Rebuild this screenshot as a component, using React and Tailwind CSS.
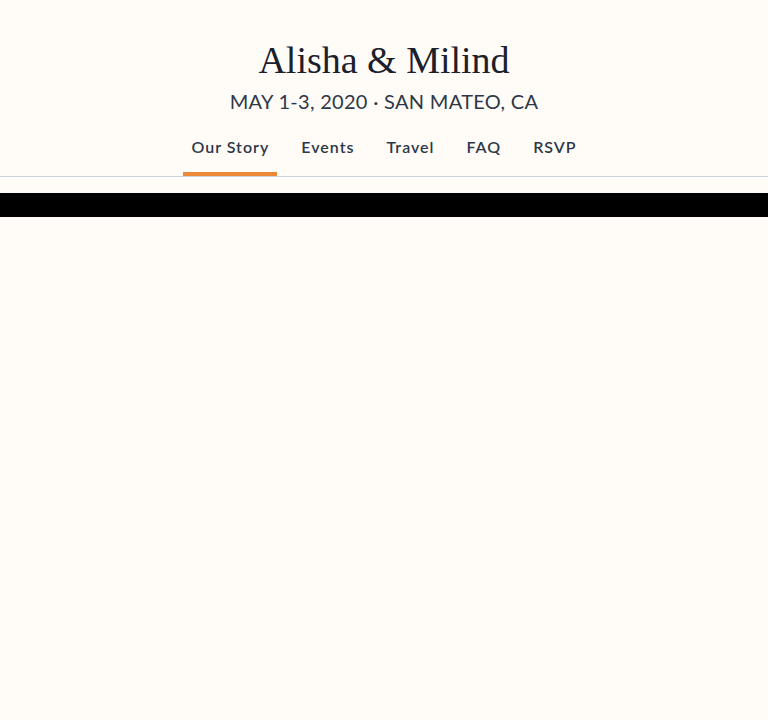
import React from "react";

const links = ["Our Story", "Events", "Travel", "FAQ", "RSVP"];

const App = () => {
  const active = "Our Story";

  return (
    <main className="min-h-screen bg-[#fffcf7] text-[#1a202c]">
      <header className="border-b border-[#cbd5e0] pt-[36px] text-center">
        <h1 className="text-[38px] leading-[48px] font-normal" style={{ fontFamily: '"Liberation Serif", "DejaVu Serif", serif' }}>
          Alisha &amp; Milind
        </h1>
        <p className="mt-[5px] text-[20px] leading-[24px] font-['Lato','Open_Sans',sans-serif] tracking-[0.3px] text-[#2d3748]">
          MAY 1-3, 2020 · SAN MATEO, CA
        </p>
        <nav className="mt-[24px] flex justify-center gap-4">
          {links.map((link) => (
            <a
              key={link}
              href="#"
              className={
                "px-2 pb-[15px] text-[16px] leading-[20px] font-semibold font-['Lato','Open_Sans',sans-serif] tracking-[1px] text-[#2d3748] border-b-4 " +
                (link === active ? "border-[#ed8936]" : "border-transparent")
              }
            >
              {link}
            </a>
          ))}
        </nav>
      </header>
      <div className="mt-4 h-6 bg-black" />
    </main>
  );
};

export default App;
